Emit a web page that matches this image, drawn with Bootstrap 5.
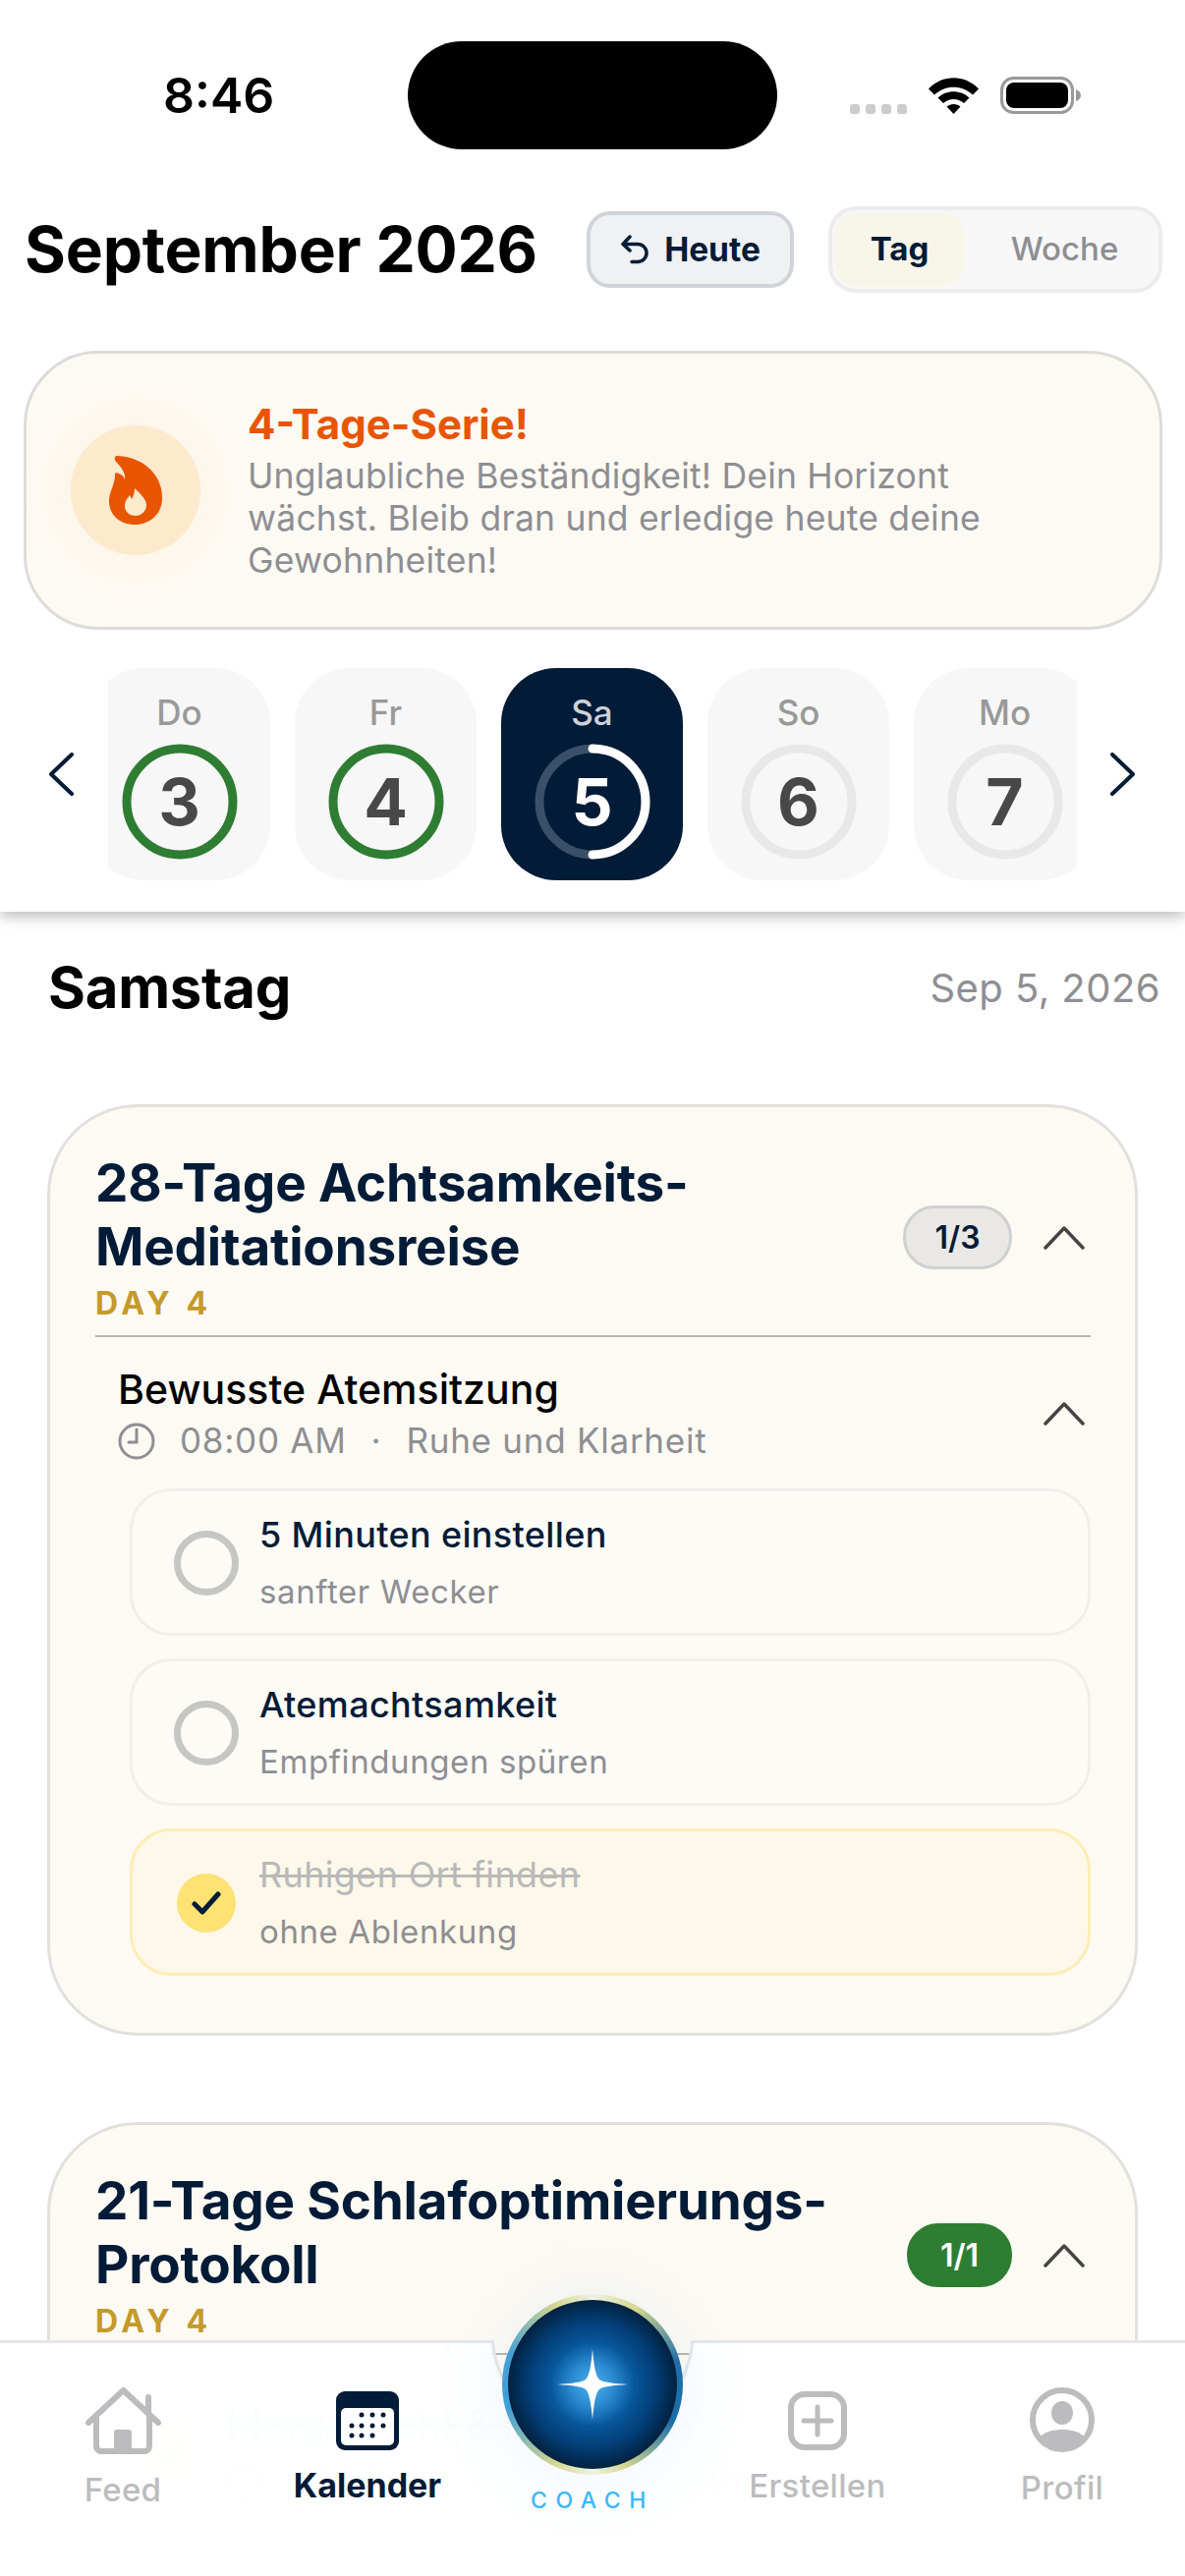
<!DOCTYPE html>
<html lang="de">
<head>
<meta charset="utf-8">
<title>Kalender</title>
<link href="https://cdn.jsdelivr.net/npm/bootstrap@5.3.0/dist/css/bootstrap.min.css" rel="stylesheet">
<style>
html,body{margin:0;background:#fff}
body{font-family:Inter,"Noto Sans",sans-serif;color:#021b36;width:1206px;height:2622px;overflow:hidden}
.scr{width:1206px;height:2622px;position:relative;overflow:hidden;background:#fff}
.hdr{height:928px;background:#fff;position:relative;z-index:2;box-shadow:0 5px 13px rgba(0,0,0,.26)}
.sbar{margin-top:0;padding-top:42px;height:152px}
.sb-time{width:415px;padding-left:166px;font-size:50px;font-weight:600;color:#000;line-height:110px;padding-top:0}
.island{width:376px;height:110px;background:#000;border-radius:55px}
.sb-right{padding-left:74px;gap:22px}
.sdots{display:flex;gap:6px;align-self:flex-end;margin-bottom:36px}
.sdots i{display:block;width:10px;height:10px;border-radius:3px;background:#ccc}
.toprow{margin-top:58px;height:88px;padding:0 23px 0 25px}
.ttl{font-size:64px;font-weight:700;color:#000;letter-spacing:-.2px;line-height:1;margin:0;width:572px}
.today.btn{width:211px;height:78px;background:#eff1f3;border:4px solid #d0d4da;border-radius:24px;color:#021b36;font-size:33.500px;font-weight:700;padding:0;gap:15px;display:flex;align-items:center;justify-content:center}
.seg{width:340px;height:88px;margin-left:35px;background:#f7f7f7;border:4px solid #ececec;border-radius:28px;padding:3px}
.seg span{display:flex;align-items:center;justify-content:center;font-size:33px;border-radius:22px}
.seg .on{width:131px;height:74px;background:#f8f5e9;color:#021b36;font-weight:700}
.seg .off{flex:1;color:#8e8e93;font-weight:500;padding-left:10px}
.streak{margin:59px 23px 0 24px;height:284px;background:#fdfaf3;border:3px solid #dddcd9;border-radius:76px;padding-left:45px;gap:48px}
.flamebox{width:132px;height:132px;border-radius:50%;background:#fde9cc;box-shadow:0 0 34px 6px rgba(253,233,204,.35);flex:none}
.st-h{font-size:42px;font-weight:700;color:#e85500;line-height:52px}
.st-b{font-size:35.500px;line-height:43px;color:#8e8e93;margin-top:5px;letter-spacing:.2px}
.strip{margin-top:39px;height:216px;padding-left:50px}
.chev{flex:none}
.clip{width:986px;margin:0 34px 0 35px;overflow:hidden;height:216px}
.daylist{margin-left:-20px;gap:25px;width:1100px}
.dayc{width:185px;height:216px;flex:none;border-radius:56px;background:#f7f7f7;text-align:center;padding-top:24px}
.dayc .lb{font-size:35px;font-weight:500;color:#999;line-height:42px;display:block}
.dayc.act{background:#021b36}
.dayc.act .lb{color:#cdd2d8}
.ringb{position:relative;width:118px;height:118px;margin:11px auto 0}
.ringb svg{position:absolute;inset:0}
.ringb b{position:absolute;inset:0;display:flex;align-items:center;justify-content:center;font-size:66px;font-weight:700;color:#484848;line-height:1}
.dayc.act .ringb b{color:#fff}
.dayhead{height:196px;padding:0 25px 0 49px;align-items:center;padding-bottom:40px}
.dayhead h2{font-size:58px;font-weight:700;color:#000;margin:0;letter-spacing:-.25px}
.dayhead span{font-size:40px;color:#8e8e93;letter-spacing:.45px}
.plan.card{margin:0 48px 0 48px;background:#fdfaf3;border:3px solid #e2e0dc;border-radius:92px;padding:45px 45px 0 46px;display:block}
.plan.second{margin-top:88px;height:440px}
.plan.first{height:948px}
.phead{height:175px}
.ptitle{font-size:53px;font-weight:700;line-height:65px;color:#021b36;letter-spacing:-.2px}
.pday{font-size:32px;font-weight:700;color:#c49a2a;letter-spacing:4.600px;line-height:40px;margin-top:5px}
.cnt.badge{width:111px;height:65px;background:#e9e8e5;border:3px solid #cfd0d0;color:#021b36;font-size:32px;font-weight:600;display:flex;align-items:center;justify-content:center;padding:0;border-radius:32px;margin-right:32px}
.cnt.done{background:#2e7d32;border-color:#2e7d32;color:#fff;width:107px}
.upc{margin-right:6px;flex:none}
.rule{margin:12px 0 0;height:2px;background:#b7b5b0;border:0;opacity:1}
.hab{margin-top:28px;padding-left:23px;height:100px}
.hname{font-size:41px;font-weight:500;color:#000;line-height:50px;letter-spacing:.05px}
.hmeta{font-size:35px;color:#8e8e93;line-height:45px;margin-top:5px;letter-spacing:.75px;gap:25px}
.tasks{margin:26px 0 0 35px;gap:23px}
.tk{height:150px;border:3px solid #f0efeb;border-radius:42px;padding:2px 0 0 42px;gap:21px;background:#fdfbf6}
.tk.ok{background:#fef8ea;border-color:#fdeeb5}
.tk .rd{width:66px;height:66px;border:7px solid #c6c6c4;border-radius:50%;flex:none}
.tk .ck{width:60px;height:60px;margin:0 3px;border-radius:50%;background:#fee273;flex:none;display:flex;align-items:center;justify-content:center}
.tk-a{font-size:36px;font-weight:500;color:#021b36;line-height:44px;letter-spacing:.35px}
.tk-b{font-size:33px;color:#8e8e93;line-height:44px;margin-top:14px;letter-spacing:.6px}
.tk.ok .tk-a{color:#b9b9b9;text-decoration:line-through;font-weight:400}
.ghost{margin-top:46px;margin-left:45px;gap:27px;height:106px;opacity:.6}
.ghost .ck{width:60px;height:60px;border-radius:50%;background:#fee273;display:flex;align-items:center;justify-content:center;flex:none}
.ghost .a{font-size:41px;font-weight:500;line-height:50px;text-decoration:line-through;color:#021b36}
.ghost .b{font-size:35px;line-height:45px;color:#8e8e93;margin-top:11px;gap:26px;letter-spacing:.5px}
.tabs{position:absolute;left:0;top:2385px;width:1206px;height:237px;z-index:5;display:grid;grid-template-columns:250px 248px 210px 248px 250px}
.tabbg{position:absolute;left:0;top:-3px;width:1206px;height:240px}
.tabi{position:relative;display:flex;flex-direction:column;align-items:center;padding-top:49px}
.tabi.tall{padding-top:45px}
.tabi span{font-size:33px;line-height:40px;margin-top:16px;font-weight:500;color:#bcbcbe;letter-spacing:.3px}
.tabi.cur span{color:#021b36;font-weight:700;font-size:34px;letter-spacing:0}
.orbw{position:relative;display:flex;flex-direction:column;align-items:center}
.orb{width:184px;height:184px;margin-top:-50px;border-radius:50%;padding:6px;flex:none;background:conic-gradient(from 0deg,#eef3e6 0deg,#d6d78f 30deg,#1f6fa8 75deg,#1a6ea6 115deg,#d6d78f 158deg,#eef3e6 180deg,#d6d78f 205deg,#3f9fd8 255deg,#47a0d6 290deg,#d6d78f 335deg,#eef3e6 360deg);box-shadow:0 0 60px 16px rgba(120,190,255,.09)}
.orbin{width:100%;height:100%;border-radius:50%;background:radial-gradient(circle closest-side,#4cb2ec 0%,#2a8ad0 26%,#07569a 50%,#033f79 74%,#02213f 100%);display:flex;align-items:center;justify-content:center}
.orbw .cl{font-size:23px;font-weight:500;letter-spacing:8.600px;color:#3db8ff;line-height:30px;margin-top:11px}
</style>
</head>
<body>
<div class="scr">
  <div class="hdr">
    <div class="sbar d-flex">
      <div class="sb-time">8:46</div>
      <div class="island"></div>
      <div class="sb-right d-flex align-items-center">
        <div class="sdots"><i></i><i></i><i></i><i></i></div>
        <svg width="51" height="37" viewBox="0 0 51 37"><path d="M0 11.500C14 -3.500 37 -3.500 51 11.500L45 17.500C34 7 17 7 6 17.500Z M9.500 20.500C18 12 33 12 41.500 20.500L36 26C29.500 20.500 21.500 20.500 15 26Z M18.500 29.500C22 26 29 26 32.500 29.500L25.500 37Z" fill="#000"/></svg>
        <svg width="82" height="38" viewBox="0 0 82 38"><rect x="1.500" y="1.500" width="72" height="35" rx="12" fill="none" stroke="#999" stroke-width="3"/><rect x="6" y="6" width="63" height="26" rx="8" fill="#000"/><path d="M77 13c3 1 5 3 5 6s-2 5-5 6z" fill="#999"/></svg>
      </div>
    </div>

    <div class="toprow d-flex align-items-center">
      <h1 class="ttl">September 2026</h1>
      <button class="today btn" type="button">
        <svg width="30" height="30" viewBox="0 0 30 30" fill="none" stroke="#021b36" stroke-width="3.500" stroke-linecap="round" stroke-linejoin="round"><path d="M10 2L3 9.500L10 16M3 9.500H18a9 9 0 0 1 0 18H12"/></svg>
        Heute
      </button>
      <div class="seg d-flex"><span class="on">Tag</span><span class="off">Woche</span></div>
    </div>

    <div class="streak d-flex align-items-center">
      <div class="flamebox d-flex align-items-center justify-content-center">
        <svg width="54" height="70" viewBox="0 0 54 70"><path fill="#e85500" fill-rule="evenodd" d="M8 0C28 0 54 14 54 43C54 59 42 70 26 70C11 70 0 60 0 46C0 36 6 30 6 19C6 17 8 17 10 18C13 19 15 21 16 24C17 18 13 12 8 7C5 4 5 0 8 0Z M26 33C32 39 38 44 38 50C38 56 33 61 27 61C21 61 16 57 16 51C16 46 19 43 21 40L23 44C25 41 26 37 26 33Z"/></svg>
      </div>
      <div>
        <div class="st-h">4-Tage-Serie!</div>
        <div class="st-b">Unglaubliche Beständigkeit! Dein Horizont<br>wächst. Bleib dran und erledige heute deine<br>Gewohnheiten!</div>
      </div>
    </div>

    <div class="strip d-flex align-items-center">
      <svg class="chev" width="25" height="44" viewBox="0 0 25 44" fill="none" stroke="#021b36" stroke-width="4" stroke-linecap="round" stroke-linejoin="round"><path d="M23 2L2 22L23 42"/></svg>
      <div class="clip">
        <div class="daylist d-flex">
          <div class="dayc"><span class="lb">Do</span><div class="ringb"><svg width="118" height="118" viewBox="0 0 118 118"><circle cx="59" cy="59" r="54" fill="none" stroke="#2e7d32" stroke-width="9"/></svg><b>3</b></div></div>
          <div class="dayc"><span class="lb">Fr</span><div class="ringb"><svg width="118" height="118" viewBox="0 0 118 118"><circle cx="59" cy="59" r="54" fill="none" stroke="#2e7d32" stroke-width="9"/></svg><b>4</b></div></div>
          <div class="dayc act"><span class="lb">Sa</span><div class="ringb"><svg width="118" height="118" viewBox="0 0 118 118" fill="none" stroke-width="9"><circle cx="59" cy="59" r="54" stroke="#3a4f68"/><path d="M59 5a54 54 0 0 1 0 108" stroke="#fff" stroke-linecap="round"/></svg><b>5</b></div></div>
          <div class="dayc"><span class="lb">So</span><div class="ringb"><svg width="118" height="118" viewBox="0 0 118 118"><circle cx="59" cy="59" r="54" fill="none" stroke="#e8e8e8" stroke-width="9"/></svg><b>6</b></div></div>
          <div class="dayc"><span class="lb">Mo</span><div class="ringb"><svg width="118" height="118" viewBox="0 0 118 118"><circle cx="59" cy="59" r="54" fill="none" stroke="#e8e8e8" stroke-width="9"/></svg><b>7</b></div></div>
        </div>
      </div>
      <svg class="chev" width="25" height="44" viewBox="0 0 25 44" fill="none" stroke="#021b36" stroke-width="4" stroke-linecap="round" stroke-linejoin="round"><path d="M2 2L23 22L2 42"/></svg>
    </div>
  </div>

  <div class="dayhead d-flex justify-content-between">
    <h2>Samstag</h2>
    <span>Sep 5, 2026</span>
  </div>

  <div class="plan first card">
    <div class="phead d-flex align-items-center justify-content-between">
      <div>
        <div class="ptitle">28-Tage Achtsamkeits-<br>Meditationsreise</div>
        <div class="pday">DAY 4</div>
      </div>
      <div class="d-flex align-items-center">
        <span class="cnt badge">1/3</span>
        <svg class="upc" width="42" height="24" viewBox="0 0 42 24" fill="none" stroke="#444" stroke-width="3.500" stroke-linecap="round" stroke-linejoin="round"><path d="M2 22L21 2L40 22"/></svg>
      </div>
    </div>
    <hr class="rule">
    <div class="hab d-flex align-items-center justify-content-between">
      <div>
        <div class="hname">Bewusste Atemsitzung</div>
        <div class="hmeta d-flex align-items-center">
          <svg width="38" height="38" viewBox="0 0 38 38" fill="none" stroke="#8e8e93" stroke-width="3" stroke-linecap="round"><circle cx="19" cy="19" r="17"/><path d="M19 7V20H11"/></svg>
          <span>08:00 AM</span><span>·</span><span>Ruhe und Klarheit</span>
        </div>
      </div>
      <svg class="upc" width="42" height="24" viewBox="0 0 42 24" fill="none" stroke="#444" stroke-width="3.500" stroke-linecap="round" stroke-linejoin="round"><path d="M2 22L21 2L40 22"/></svg>
    </div>
    <div class="tasks d-flex flex-column">
      <div class="tk d-flex align-items-center"><div class="rd"></div><div><div class="tk-a">5 Minuten einstellen</div><div class="tk-b">sanfter Wecker</div></div></div>
      <div class="tk d-flex align-items-center"><div class="rd"></div><div><div class="tk-a">Atemachtsamkeit</div><div class="tk-b">Empfindungen spüren</div></div></div>
      <div class="tk ok d-flex align-items-center"><div class="ck"><svg width="30" height="24" viewBox="0 0 30 24" fill="none" stroke="#021b36" stroke-width="5" stroke-linecap="round" stroke-linejoin="round"><path d="M3 13L11 21L27 3"/></svg></div><div><div class="tk-a">Ruhigen Ort finden</div><div class="tk-b">ohne Ablenkung</div></div></div>
    </div>
  </div>

  <div class="plan second card">
    <div class="phead d-flex align-items-center justify-content-between">
      <div>
        <div class="ptitle">21-Tage Schlafoptimierungs-<br>Protokoll</div>
        <div class="pday">DAY 4</div>
      </div>
      <div class="d-flex align-items-center">
        <span class="cnt done badge">1/1</span>
        <svg class="upc" width="42" height="24" viewBox="0 0 42 24" fill="none" stroke="#444" stroke-width="3.500" stroke-linecap="round" stroke-linejoin="round"><path d="M2 22L21 2L40 22"/></svg>
      </div>
    </div>
    <hr class="rule">
    <div class="ghost d-flex align-items-center">
      <div class="ck"><svg width="30" height="24" viewBox="0 0 30 24" fill="none" stroke="#021b36" stroke-width="5" stroke-linecap="round" stroke-linejoin="round"><path d="M3 13L11 21L27 3"/></svg></div>
      <div>
        <div class="a">Morgenlicht &amp; Melatonin</div>
        <div class="b d-flex align-items-center"><svg width="38" height="38" viewBox="0 0 38 38" fill="none" stroke="#8e8e93" stroke-width="3" stroke-linecap="round"><circle cx="19" cy="19" r="17"/><path d="M19 7V20H11"/></svg><span>07:00 AM</span><span>·</span><span>Zirkadianer Rhythmus</span></div>
      </div>
    </div>
  </div>

  <nav class="tabs">
    <svg class="tabbg" viewBox="0 0 1206 240" preserveAspectRatio="none">
      <path d="M0 3H501A102 102 0 0 0 705 3H1206V240H0Z" fill="#fff" fill-opacity=".985"/>
      <path d="M0 1.500H501.500V3A102 102 0 0 0 704.500 3V1.500H1206" fill="none" stroke="#e6e6e8" stroke-width="3"/>
    </svg>
    <div class="tabi tall">
      <svg width="77" height="68" viewBox="0 0 77 68"><g fill="none" stroke="#bcbcbe" stroke-width="6" stroke-linecap="round" stroke-linejoin="round"><path d="M3 36L38.500 3L74 36"/><path d="M11 29V60a5 5 0 0 0 5 5H60a5 5 0 0 0 5-5V29"/><path d="M64 10V26"/></g><rect x="29" y="43" width="18" height="23" rx="3" fill="#bcbcbe"/></svg>
      <span>Feed</span>
    </div>
    <div class="tabi cur">
      <svg width="64" height="60" viewBox="0 0 64 60"><rect width="64" height="60" rx="9" fill="#021b36"/><rect x="5" y="17" width="54" height="38" rx="5" fill="#fff"/><g fill="#021b36"><circle cx="26" cy="24" r="2.500"/><circle cx="37" cy="24" r="2.500"/><circle cx="48" cy="24" r="2.500"/><circle cx="16" cy="35" r="2.500"/><circle cx="26" cy="35" r="2.500"/><circle cx="37" cy="35" r="2.500"/><circle cx="48" cy="35" r="2.500"/><circle cx="16" cy="45" r="2.500"/><circle cx="26" cy="45" r="2.500"/><circle cx="37" cy="45" r="2.500"/></g></svg>
      <span>Kalender</span>
    </div>
    <div class="orbw">
      <div class="orb"><div class="orbin"><svg width="72" height="72" viewBox="0 0 72 72"><path d="M36 0C37.500 18 39.500 28 43 31C46 33.500 56 35 72 36C56 37 46 38.500 43 41C39.500 44 37.500 54 36 72C34.500 54 32.500 44 29 41C26 38.500 16 37 0 36C16 35 26 33.500 29 31C32.500 28 34.500 18 36 0Z" fill="#fff"/></svg></div></div>
      <div class="cl">COACH</div>
    </div>
    <div class="tabi">
      <svg width="60" height="60" viewBox="0 0 60 60" fill="none" stroke="#bcbcbe"><rect x="3" y="3" width="54" height="54" rx="14" stroke-width="6"/><path d="M30 16V44M16 30H44" stroke-width="5" stroke-linecap="round"/></svg>
      <span>Erstellen</span>
    </div>
    <div class="tabi tall">
      <svg width="66" height="66" viewBox="0 0 66 66"><circle cx="33" cy="33" r="30" fill="none" stroke="#bcbcbe" stroke-width="6"/><ellipse cx="33" cy="26" rx="11" ry="12" fill="#bcbcbe"/><path d="M9.500 52C14 45 23 43 33 43C43 43 52 45 56.500 52C50 59 42 63 33 63C24 63 16 59 9.500 52Z" fill="#bcbcbe"/></svg>
      <span>Profil</span>
    </div>
  </nav>
</div>
<script src="https://cdn.jsdelivr.net/npm/bootstrap@5.3.0/dist/js/bootstrap.bundle.min.js"></script>
</body>
</html>
